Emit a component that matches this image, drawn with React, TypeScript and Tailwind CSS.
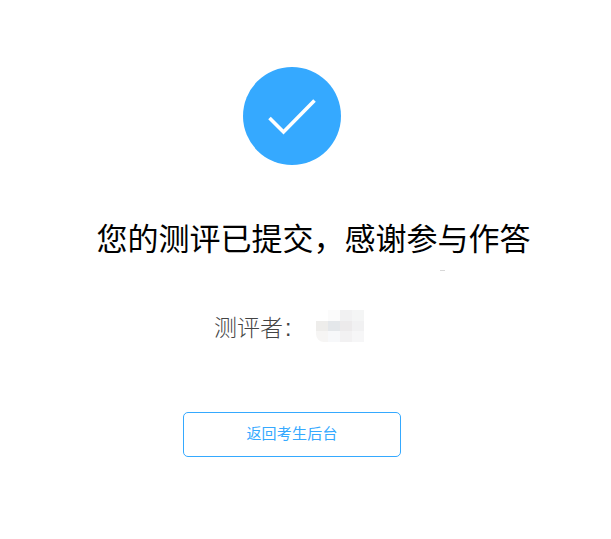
export default function App() {
  const cells = [
    ["bg-white", "bg-[#fbfbfb]", "bg-[#f1f1f2]", "bg-[#f4f5f5]"],
    ["bg-[#eeedeb]", "bg-[#e4e7ea]", "bg-[#eceaeb]", "bg-[#f1f1f2]"],
    ["bg-[#f6f5f4]", "bg-[#f7f8fa]", "bg-[#f2f1f2]", "bg-[#f6f6f7]"],
  ];
  return (
    <div className="relative w-[611px] h-[539px] bg-white overflow-hidden flex flex-col items-center pr-[27px] pt-[67px] font-['Liberation_Sans','Noto_Sans_CJK_SC',sans-serif]">
      <div className="w-[98px] h-[98px] rounded-full bg-[#35a9ff] flex items-center justify-center shrink-0">
        <svg width="98" height="98" viewBox="0 0 98 98" fill="none">
          <path d="M26.5 51 L40.5 65 L71.5 33.5" stroke="#fff" strokeWidth="3.6" />
        </svg>
      </div>
      <h1 className="mt-[53px] ml-[43px] text-[31px] leading-[44px] font-normal text-black whitespace-nowrap">
        您的测评已提交，感谢参与作答
      </h1>
      <div className="absolute left-[440px] top-[270px] w-[5px] h-[1px] bg-[#d8d8d8]" />
      <div className="mt-[48px] flex items-start ml-[-6px]">
        <span className="mt-[2px] text-[23px] leading-[32px] font-light text-[#444] whitespace-nowrap w-[102px]">测评者<span className="ml-[2px]">:</span></span>
        <div className="grid grid-cols-4 w-[48px] h-[32px] rounded-l-[8px] overflow-hidden">
          {cells.flat().map((c, i) => (
            <div key={i} className={c} />
          ))}
        </div>
      </div>
      <button className="mt-[68px] w-[218px] h-[45px] rounded-[5px] border border-[#35a9ff] bg-white text-[#35a9ff] text-[15px] tracking-[0.2px]">
        返回考生后台
      </button>
    </div>
  );
}
